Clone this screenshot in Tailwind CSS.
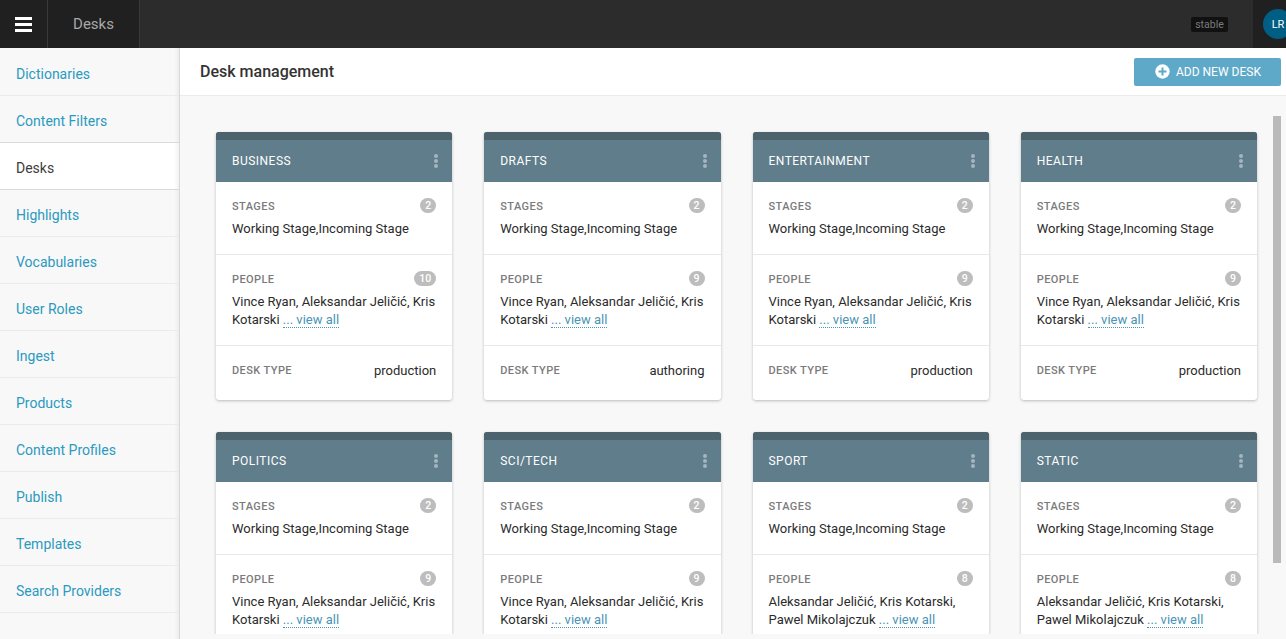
<!DOCTYPE html>
<html lang="en">
<head>
<meta charset="utf-8">
<title>Desk management</title>
<script src="https://cdn.jsdelivr.net/npm/@tailwindcss/browser@4"></script>
</head>
<body class="h-[639px] overflow-hidden bg-[#f8f8f8] font-['Roboto',sans-serif] text-[13px] leading-[18px] text-[#2b2b2b]">
<div class="flex h-[639px] w-[1286px] flex-col overflow-hidden">
  <header class="flex h-12 shrink-0 bg-[#2c2c2c]">
    <button class="flex h-12 w-12 items-center border-r border-[#3a3a3a] bg-[#202020] pl-[15px]" aria-label="Menu">
      <svg width="17" height="15" viewBox="0 0 17 15" fill="#fff"><path d="M0 0h17v3H0zM0 6h17v3H0zM0 12h17v3H0z"/></svg>
    </button>
    <div class="flex h-12 w-[92px] items-center justify-center border-r border-[#3a3a3a] bg-[#202020] text-[15px] text-[#a8a8a8]">Desks</div>
    <div class="flex flex-1 items-center justify-end pr-[25px]">
      <span class="flex h-[15px] w-[37px] items-center justify-center rounded-xs bg-[#111] pt-0.5 text-[10.5px] text-[#7b7b7b]">stable</span>
    </div>
    <div class="flex h-12 w-[33px] items-center overflow-hidden bg-[#202020] pl-2.5">
      <span class="flex size-[30px] shrink-0 items-center justify-center rounded-full bg-[#005e84] pt-px text-[11px] text-white">LR</span>
    </div>
  </header>
  <div class="flex min-h-0 flex-1">
    <nav id="nav" class="w-[180px] shrink-0 border-r border-[#d9d9d9] bg-[linear-gradient(to_left,#ededed,#f8f8f8_5px)] text-[14px]"></nav>
    <main class="flex min-w-0 flex-1 flex-col">
      <div class="flex h-12 shrink-0 items-center justify-between border-b border-[#ebebeb] bg-white pr-[5px] pl-5">
        <h1 class="text-[16px] font-medium text-[#333]">Desk management</h1>
        <button class="flex h-7 w-[147px] items-center rounded-xs bg-[#5ea9c8] pl-[21px] text-[12px] text-white">
          <svg class="mr-1.5 -mt-px" width="15" height="15" viewBox="0 0 15 15"><circle cx="7.5" cy="7.5" r="7.2" fill="#fff"/><path d="M6.5 3.5h2v3h3v2h-3v3h-2v-3h-3v-2h3z" fill="#5ea9c8"/></svg>ADD NEW DESK
        </button>
      </div>
      <div class="flex h-[538px] overflow-hidden pt-5 pl-5">
        <div id="desks" class="grid w-[1073px] shrink-0 grid-cols-4 content-start gap-8 px-4 pt-4"></div>
        <div class="h-[447px] w-2 shrink-0 bg-[#bababa]"></div>
      </div>
    </main>
  </div>
</div>
<script>
const items = ['Dictionaries','Content Filters','Desks','Highlights','Vocabularies','User Roles','Ingest','Products','Content Profiles','Publish','Templates','Search Providers'];
document.getElementById('nav').innerHTML = items.map((t, i) => {
  const look = t === 'Desks' ? 'border-[#dadada] bg-[linear-gradient(to_left,#f2f2f2,#fff_5px)] text-[#3d3d3d]'
    : i === 1 ? 'border-[#dadada] text-[#2b9abf]' : 'border-[#ebebeb] text-[#2b9abf]';
  return `<a class="flex h-[47px] items-center border-b pt-1 pl-4 first:h-12 ${look}">${t}</a>`;
}).join('');

const vince = ['Vince Ryan, Aleksandar Jeličić, Kris', 'Kotarski'];
const alek = ['Aleksandar Jeličić, Kris Kotarski,', 'Pawel Mikolajczuk'];
const desks = [
  ['BUSINESS', 10, vince, 'production'], ['DRAFTS', 9, vince, 'authoring'],
  ['ENTERTAINMENT', 9, vince, 'production'], ['HEALTH', 9, vince, 'production'],
  ['POLITICS', 9, vince, 'production'], ['SCI/TECH', 9, vince, 'production'],
  ['SPORT', 8, alek, 'production'], ['STATIC', 8, alek, 'production'],
];
const label = t => `<span class="pt-0.5 text-[11px] font-medium tracking-[0.42px] text-[#7b7b7b]">${t}</span>`;
const badge = n => `<span class="-mt-px flex h-[15px] min-w-4 items-center justify-center rounded-full bg-[#bdbdbd] px-[5px] text-[10.5px] font-medium text-white">${n}</span>`;
document.getElementById('desks').innerHTML = desks.map(([name, n, people, type]) => `
  <article class="h-[268px] overflow-hidden rounded-[3px] bg-white shadow-[0_1px_3px_rgba(0,0,0,0.25)]">
    <div class="flex h-[50px] items-center justify-between border-t-8 border-[#4c626d] bg-[#607d8b] pr-3.5 pl-4 text-[12px] tracking-[0.48px] text-white">
      <span>${name}</span>
      <svg width="4" height="14" viewBox="0 0 4 14" fill="#a5b5bd"><circle cx="2" cy="2" r="2"/><circle cx="2" cy="7" r="2"/><circle cx="2" cy="12" r="2"/></svg>
    </div>
    <section class="h-[73px] border-b border-[#e8e8e8] px-4 pt-[15px]">
      <div class="mb-[5px] flex h-[18px] items-center justify-between">${label('STAGES')}${badge(2)}</div>
      <p class="whitespace-nowrap">Working Stage,Incoming Stage</p>
    </section>
    <section class="h-[91px] border-b border-[#e8e8e8] px-4 pt-[15px]">
      <div class="mb-[5px] flex h-[18px] items-center justify-between">${label('PEOPLE')}${badge(n)}</div>
      <p class="whitespace-nowrap">${people[0]}<br>${people[1]} <a class="border-b border-dotted border-[#4a94b5] text-[#4a94b5]">... view all</a></p>
    </section>
    <section class="flex items-start justify-between px-4 pt-[15px]"><span>${label('DESK TYPE')}</span><span class="pt-px">${type}</span></section>
  </article>`).join('');
</script>
</body>
</html>
